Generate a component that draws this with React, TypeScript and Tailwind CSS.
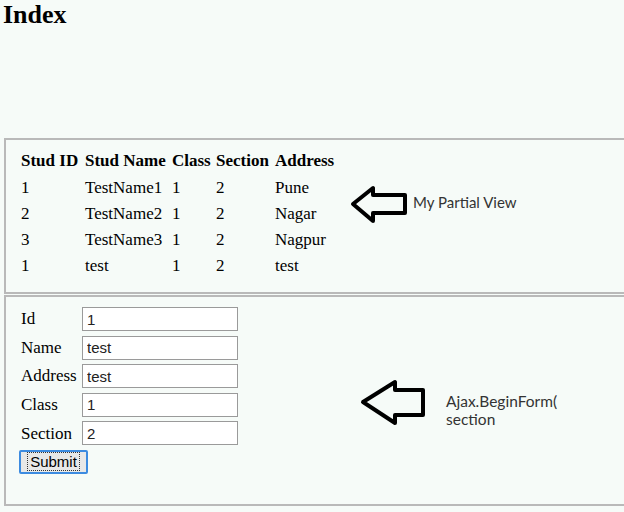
const students = [
  { id: '1', name: 'TestName1', cls: '1', section: '2', address: 'Pune' },
  { id: '2', name: 'TestName2', cls: '1', section: '2', address: 'Nagar' },
  { id: '3', name: 'TestName3', cls: '1', section: '2', address: 'Nagpur' },
  { id: '1', name: 'test', cls: '1', section: '2', address: 'test' },
];

const fields = [
  { label: 'Id', value: '1' },
  { label: 'Name', value: 'test' },
  { label: 'Address', value: 'test' },
  { label: 'Class', value: '1' },
  { label: 'Section', value: '2' },
];

const cols = 'grid grid-cols-[64px_87px_44px_59px_62px] h-[26.25px] items-center';

function Arrow({ w, h, d }: { w: number; h: number; d: string }) {
  return (
    <svg width={w} height={h} viewBox={`0 0 ${w} ${h}`} className="shrink-0">
      <path d={d} fill="none" stroke="#000" strokeWidth={4} strokeLinejoin="round" />
    </svg>
  );
}

export default function App() {
  return (
    <div className="min-h-[512px] bg-[#f6fbf8] font-['Liberation_Serif',serif] text-black">
      <h2 className="pl-[3px] text-[26px] font-bold leading-[30px]">Index</h2>

      {/* partial view */}
      <div className="ml-[4px] mt-[108px] flex border-2 border-r-0 border-[#b9b9b9] pb-[13px] pl-[15px] pt-[8px]">
        <div className="text-[17px]">
          <div className={`${cols} font-bold`}>
            <span>Stud ID</span>
            <span>Stud Name</span>
            <span>Class</span>
            <span>Section</span>
            <span>Address</span>
          </div>
          {students.map((s, i) => (
            <div key={i} className={cols}>
              <span>{s.id}</span>
              <span>{s.name}</span>
              <span>{s.cls}</span>
              <span>{s.section}</span>
              <span>{s.address}</span>
            </div>
          ))}
        </div>
        <div className="ml-[13px] mt-[37px] flex items-center self-start">
          <Arrow w={58} h={40} d="M3 19 L23 3 L23 10 L55 10 L55 28 L23 28 L23 36 Z" />
          <span className="-mt-[5px] ml-[5px] font-['Lato',sans-serif] text-[15px] text-[#333]">
            My Partial View
          </span>
        </div>
      </div>

      {/* Ajax form */}
      <div className="ml-[4px] mt-[1px] flex h-[211px] border-2 border-r-0 border-[#b9b9b9] pl-[15px] pt-[7.5px]">
        <div className="flex flex-col">
          {fields.map((f) => (
            <div key={f.label} className="grid h-[28.6px] grid-cols-[61px_156px] items-center">
              <span className="text-[17px]">{f.label}</span>
              <input
                readOnly
                value={f.value}
                className="h-[24px] w-[156px] border border-[#9a9a9a] bg-white px-[4px] font-['Liberation_Sans',sans-serif] text-[15px] text-[#222] outline-none"
              />
            </div>
          ))}
          <button
            type="button"
            className="-ml-[2px] mt-[2px] flex h-[24px] w-[69px] items-center justify-center rounded-[2px] border-2 border-[#3d8be0] bg-[#e8e8e8] font-['Liberation_Sans',sans-serif] text-[15px] leading-none"
          >
            <span className="border border-dotted border-[#333] px-[2px] py-[1px]">Submit</span>
          </button>
        </div>
        <div className="ml-[122px] mt-[74.5px] flex items-start self-start">
          <Arrow w={66} h={47} d="M3 23 L35 3 L35 11 L63 11 L63 36 L35 36 L35 44 Z" />
          <span className="ml-[20px] mt-[13px] font-['Lato',sans-serif] text-[15.5px] leading-[18px] text-[#333]">
            Ajax.BeginForm(
            <br />
            section
          </span>
        </div>
      </div>
    </div>
  );
}
